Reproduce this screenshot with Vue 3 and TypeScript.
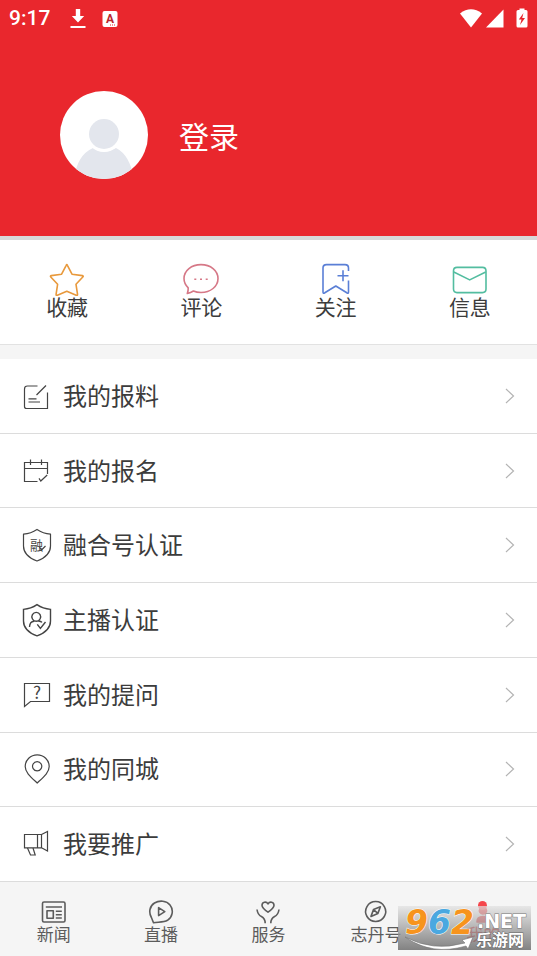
<script setup lang="ts">
interface Shortcut {
  label: string
  color: string
  paths: string[]
}

interface MenuItem {
  label: string
  paths: string[]
  weight: number
  glyph?: string
  glyphSize?: number
  glyphX?: number
  glyphY?: number
}

interface Tab {
  label: string
  paths: string[]
  active?: boolean
}

const shortcuts: Shortcut[] = [
  {
    label: '收藏',
    color: '#e8993c',
    paths: [
      'M17.2 3.3Q17.8 2 18.4 3.3L23 12.2L33.4 13.6Q34.8 14 33.8 15L27 22.3L28.5 32.2Q28.6 33.8 27.2 33.2L17.8 29.2L8.4 33.2Q7 33.8 7.1 32.2L8.6 22.3L1.8 15Q.9 14 2.2 13.6L12.6 12.2Z',
    ],
  },
  {
    label: '评论',
    color: '#d67887',
    paths: [
      'M5.200 25.800C2.500 23.200 1 20 1 16.500C1 8.500 8.500 2.600 18 2.600C27.500 2.600 35 8.500 35 16.500C35 24.500 27.500 30.500 18 30.500C15.200 30.500 12.600 30 10.400 29C8.600 30.200 6.600 31 4.300 31.500Q5.400 28.500 5.200 25.800Z',
      'M11.300 17.200h2M17 17.200h2M22.700 17.200h2',
    ],
  },
  {
    label: '关注',
    color: '#5a7fd6',
    paths: [
      'M30.5 9V6Q30.5 2.6 27 2.6H8.5Q5 2.6 5 6V30Q5 32 6.8 30.8L17.8 24L28.8 30.8Q30.5 32 30.5 30V18.5',
      'M19.5 13.7h11M25 8.2v11',
    ],
  },
  {
    label: '信息',
    color: '#53bda0',
    paths: [
      'M5 5.4H30.5Q34 5.4 34 9V27Q34 30.6 30.5 30.6H5Q1.5 30.6 1.5 27V9Q1.5 5.4 5 5.4Z',
      'M1.8 10L17.7 17.9L33.7 10',
    ],
  },
]

const menu: MenuItem[] = [
  {
    label: '我的报料',
    weight: 1.2,
    paths: [
      'M15.5 7H5.5Q2.5 7 2.5 10V27.5Q2.5 29.5 4.5 29.5H25.5V13.5',
      'M14.5 16L24 6.5',
      'M6.5 19.8H14.5M6.5 23H18',
    ],
  },
  {
    label: '我的报名',
    weight: 1.2,
    paths: [
      'M15.5 27.5H2.5V8.5H25.5V20',
      'M2.5 14.5H25.5M8.5 5.5V11M19.5 5.5V11',
      'M17 24.3L18.8 27L25.2 21',
    ],
  },
  {
    label: '融合号认证',
    weight: 1.2,
    glyph: '融',
    glyphSize: 13,
    glyphX: 8,
    glyphY: 22,
    paths: [
      'M15 1.5Q9 5.6 1.5 6.2V18Q1.5 28 15 33Q28.5 28 28.5 18V6.2Q21 5.6 15 1.5Z',
      'M17.5 19L19.5 22L23.5 18',
    ],
  },
  {
    label: '主播认证',
    weight: 1.4,
    paths: [
      'M15 1.7Q9 5.8 1.5 6.4V18Q1.5 28 15 32.8Q28.5 28 28.5 18V6.4Q21 5.8 15 1.7Z',
      'M14.3 9.4A4.4 4.4 0 1 1 14.2 9.4ZM7.5 24Q7.8 18.4 12 18.2M16.6 18Q19 18.2 20 19.4',
      'M15.3 21.3L18.4 25.4L23.5 19',
    ],
  },
  {
    label: '我的提问',
    weight: 1.2,
    glyph: '?',
    glyphSize: 17,
    glyphX: 11,
    glyphY: 21,
    paths: ['M2.5 5.5H27.5V23.5H8.5L2.5 28.5Z'],
  },
  {
    label: '我的同城',
    weight: 1.2,
    paths: [
      'M15.2 31C9 25.2 3.2 20.5 3.2 14.5A12 11.7 0 0 1 27.2 14.5C27.2 20.5 21.4 25.2 15.2 31Z',
      'M15.2 9.7A4.6 4.6 0 1 1 15.1 9.7Z',
    ],
  },
  {
    label: '我要推广',
    weight: 1.2,
    paths: [
      'M15.5 7.5H2.5V20.8H15.5ZM15.5 7.5H19.5V20.8H15.5M19.5 7.5L25.5 4.5V24L19.5 20.8',
      'M5.5 21L8.5 28H13.2L11 21',
    ],
  },
]

const tabs: Tab[] = [
  {
    label: '新闻',
    paths: [
      'M3 2H22.5Q24 2 24 3.5V20.5Q24 22 22.5 22H3Q1.5 22 1.5 20.5V3.5Q1.5 2 3 2Z',
      'M4.8 7H21M6 10.8H12.3V18.3H6ZM14.8 11.3H20.8M14.8 14.7H20.8M14.8 18H20.8',
    ],
  },
  {
    label: '直播',
    paths: [
      'M5.500 22.800L3.400 17.500C.5 12.500 1.500 6 6.500 3C11.500 0 18.500.6 22 5C26 10 24.500 17 19.500 20.300C16 22.500 11 22 5.500 22.800Z',
      'M10.6 7.6V15.6L16.8 11.6Z',
    ],
  },
  {
    label: '服务',
    paths: [
      'M13 12.2C9.4 9.6 7 7.7 7 5.2C7 1.8 11.4.9 13 4C14.6.9 19 1.8 19 5.2C19 7.7 16.6 9.6 13 12.2Z',
      'M2 9.5Q2.8 15 6.4 16.5Q10.2 18.5 10.2 23.2M24 9.5Q23.2 15 19.6 16.5Q15.8 18.5 15.8 23.2',
    ],
  },
  {
    label: '志丹号',
    paths: [
      'M12.7 1.5A10 10 0 1 1 12.6 1.5Z',
      'M17.4 6.8L14.9 13.4L8 16.4L10.5 9.6ZM10.5 9.6L14.9 13.4',
    ],
  },
  {
    label: '我的',
    active: true,
    paths: ['M13 7A3.500 3.500 0 1 1 12.900 7Z', 'M7 22Q7 16.500 13 16.500Q19 16.500 19 22Z'],
  },
]
</script>

<template>
  <div class="page">
    <header class="hero">
      <div class="status">
        <span class="clock">9:17</span>
        <svg class="status-icon" width="18" height="22" viewBox="0 0 18 22">
          <path d="M7.800 1h4.400v7h4L10 14.600 3.800 8h4zM2.500 18h15v2h-15z" fill="#fff" />
        </svg>
        <svg class="status-icon" width="16" height="18" viewBox="0 0 16 18">
          <rect x="0.5" y="1" width="15" height="16" rx="2" fill="#fff" />
          <text x="4" y="12.5" class="badge-letter">A</text>
          <path d="M8 15h1M10 15h1M12 15h1" stroke="#e9272d" />
        </svg>
        <svg class="signals" width="70" height="22" viewBox="0 0 70 22">
          <path d="M1 5.5Q12-2.8 23 5.5L12 19.5Z" fill="#fff" />
          <path d="M44.5 1.5V19.5H27Z" fill="#fff" />
          <path d="M59 2h1.500V.5h5V2H67q1.500 0 1.500 1.500V18q0 1.500-1.500 1.500h-8q-1.500 0-1.500-1.500V3.500Q57.500 2 59 2z" fill="#fff" />
          <path d="M64.500 5L59.800 11.500H62.500L61 17L66 10H63.200Z" fill="#e9272d" />
        </svg>
      </div>
      <button class="profile" type="button">
        <svg class="avatar" width="88" height="88" viewBox="0 0 88 88">
          <defs>
            <clipPath id="avatar-clip"><circle cx="44" cy="44" r="44" /></clipPath>
          </defs>
          <circle cx="44" cy="44" r="44" fill="#fff" />
          <g clip-path="url(#avatar-clip)">
            <path d="M14 88Q17 64 33 57Q44 64 56 57Q70 64 74 88Z" fill="#e3e6ed" />
            <circle cx="44" cy="43" r="18" fill="#fff" />
            <circle cx="44" cy="43" r="15" fill="#e3e6ed" />
          </g>
        </svg>
        <span>登录</span>
      </button>
    </header>

    <nav class="shortcuts">
      <a v-for="s in shortcuts" :key="s.label" href="#">
        <svg
          width="36"
          height="34"
          viewBox="0 0 36 34"
          fill="none"
          :stroke="s.color"
          stroke-width="1.600"
          stroke-linejoin="round"
        >
          <path v-for="d in s.paths" :key="d" :d="d" />
        </svg>
        <span>{{ s.label }}</span>
      </a>
    </nav>

    <ul class="menu">
      <li v-for="m in menu" :key="m.label">
        <a href="#">
          <svg
            width="30"
            height="34"
            viewBox="0 0 30 34"
            fill="none"
            stroke="#444"
            :stroke-width="m.weight"
          >
            <path v-for="d in m.paths" :key="d" :d="d" />
            <text
              v-if="m.glyph"
              :x="m.glyphX"
              :y="m.glyphY"
              :font-size="m.glyphSize"
              class="icon-glyph"
            >{{ m.glyph }}</text>
          </svg>
          <span class="name">{{ m.label }}</span>
          <svg width="10" height="16" viewBox="0 0 10 16" fill="none" stroke="#b4b4b4" stroke-width="1.200">
            <path d="M1 1L8.500 8L1 15" />
          </svg>
        </a>
      </li>
    </ul>

    <footer class="bottom">
      <nav class="tabs">
        <a v-for="t in tabs" :key="t.label" href="#" :class="{ active: t.active }">
          <span class="tab-icon">
            <svg
              width="26"
              height="24"
              viewBox="0 0 26 24"
              :fill="t.active ? 'currentColor' : 'none'"
              stroke="currentColor"
              stroke-width="1.600"
              stroke-linejoin="round"
            >
              <path v-for="d in t.paths" :key="d" :d="d" />
            </svg>
            <i v-if="t.active" class="dot"></i>
          </span>
          <span>{{ t.label }}</span>
        </a>
      </nav>
      <div class="stamp">
        <svg width="133" height="44" viewBox="0 0 133 44">
          <path d="M7 31Q35 46 67 37L64 34L75 31L70 43L68 40Q34 50 7 31Z" fill="#fff" stroke="#777" stroke-width="0.600" />
          <g class="digits">
            <text x="7" y="28" fill="#f7941d">9</text>
            <text x="30" y="28" fill="#4aa8e0">6</text>
            <text x="53" y="28" fill="#f7941d">2</text>
          </g>
          <text x="79" y="22" class="domain">.NET</text>
          <text x="78" y="40" class="site">乐游网</text>
        </svg>
      </div>
    </footer>
  </div>
</template>

<style>
body {
  margin: 0;
}
</style>

<style scoped>
.page {
  display: flex;
  flex-direction: column;
  min-height: 100vh;
  background: #fff;
  color: #3c3c3c;
  font-family: "Noto Sans CJK SC", sans-serif;
}

a {
  color: inherit;
  text-decoration: none;
}

svg {
  display: block;
  flex: none;
}

.hero {
  background: #e9272d;
  border-bottom: 4px solid #d8d8d8;
  padding-bottom: 57px;
}

.status {
  display: flex;
  align-items: center;
  height: 37px;
  padding: 0 8px 0 9px;
}

.clock {
  margin-right: 18px;
  color: #fff;
  font: 500 21px/37px Roboto, sans-serif;
}

.status-icon {
  margin-right: 16px;
}

.badge-letter {
  font: 700 12px Roboto, sans-serif;
  fill: #b9272d;
}

.signals {
  margin-left: auto;
}

.profile {
  display: flex;
  align-items: center;
  gap: 31px;
  margin: 54px 0 0 60px;
  padding: 0;
  border: 0;
  background: none;
  color: #fff;
  font: 30px/44px "Noto Sans CJK SC", sans-serif;
}

.shortcuts {
  display: grid;
  grid-template-columns: repeat(4, 1fr);
  height: 83px;
  padding-top: 22px;
  font-size: 21px;
  line-height: 21px;
}

.shortcuts a {
  display: flex;
  flex-direction: column;
  align-items: center;
}

.menu {
  display: grid;
  flex: 1;
  grid-auto-rows: 1fr;
  margin: 0;
  padding: 0;
  border-top: 14px solid #f5f5f5;
  box-shadow: 0 -1px #e2e2e2;
  list-style: none;
}

.menu li {
  display: flex;
  border-bottom: 1px solid #dcdcdc;
}

.menu a {
  display: flex;
  flex: 1;
  align-items: center;
  padding: 0 22px;
}

.name {
  flex: 1;
  margin-left: 11px;
  padding-bottom: 2px;
  font-size: 24px;
  line-height: 36px;
}

.icon-glyph {
  fill: #444;
  stroke: none;
  font-family: "Noto Sans CJK SC", sans-serif;
}

.bottom {
  position: relative;
  background: #f5f5f5;
}

.tabs {
  display: grid;
  grid-template-columns: repeat(5, 1fr);
  height: 56px;
  padding-top: 18px;
  color: #5c5c5c;
  font-size: 17px;
  line-height: 20px;
}

.tabs a {
  display: flex;
  flex-direction: column;
  align-items: center;
}

.tabs .active {
  color: #e9272d;
}

.tab-icon {
  position: relative;
}

.dot {
  position: absolute;
  z-index: 0;
  top: 1px;
  left: 8px;
  width: 9px;
  height: 9px;
  border-radius: 50%;
  background: #f5454b;
}

.stamp {
  position: absolute;
  right: 6px;
  bottom: 6px;
  background: linear-gradient(rgba(225, 225, 225, 0.7), rgba(110, 110, 110, 0.85));
}

.digits {
  font: italic 700 33px "DejaVu Sans", sans-serif;
  stroke: #fff;
  stroke-width: 1px;
  paint-order: stroke;
}

.domain {
  font: 700 19px "DejaVu Sans", sans-serif;
  fill: #fff;
  stroke: #777;
  stroke-width: 1px;
  paint-order: stroke;
}

.site {
  font: 700 16px "Noto Sans CJK SC", sans-serif;
  fill: #fff;
  stroke: #666;
  stroke-width: 1px;
  paint-order: stroke;
}
</style>
